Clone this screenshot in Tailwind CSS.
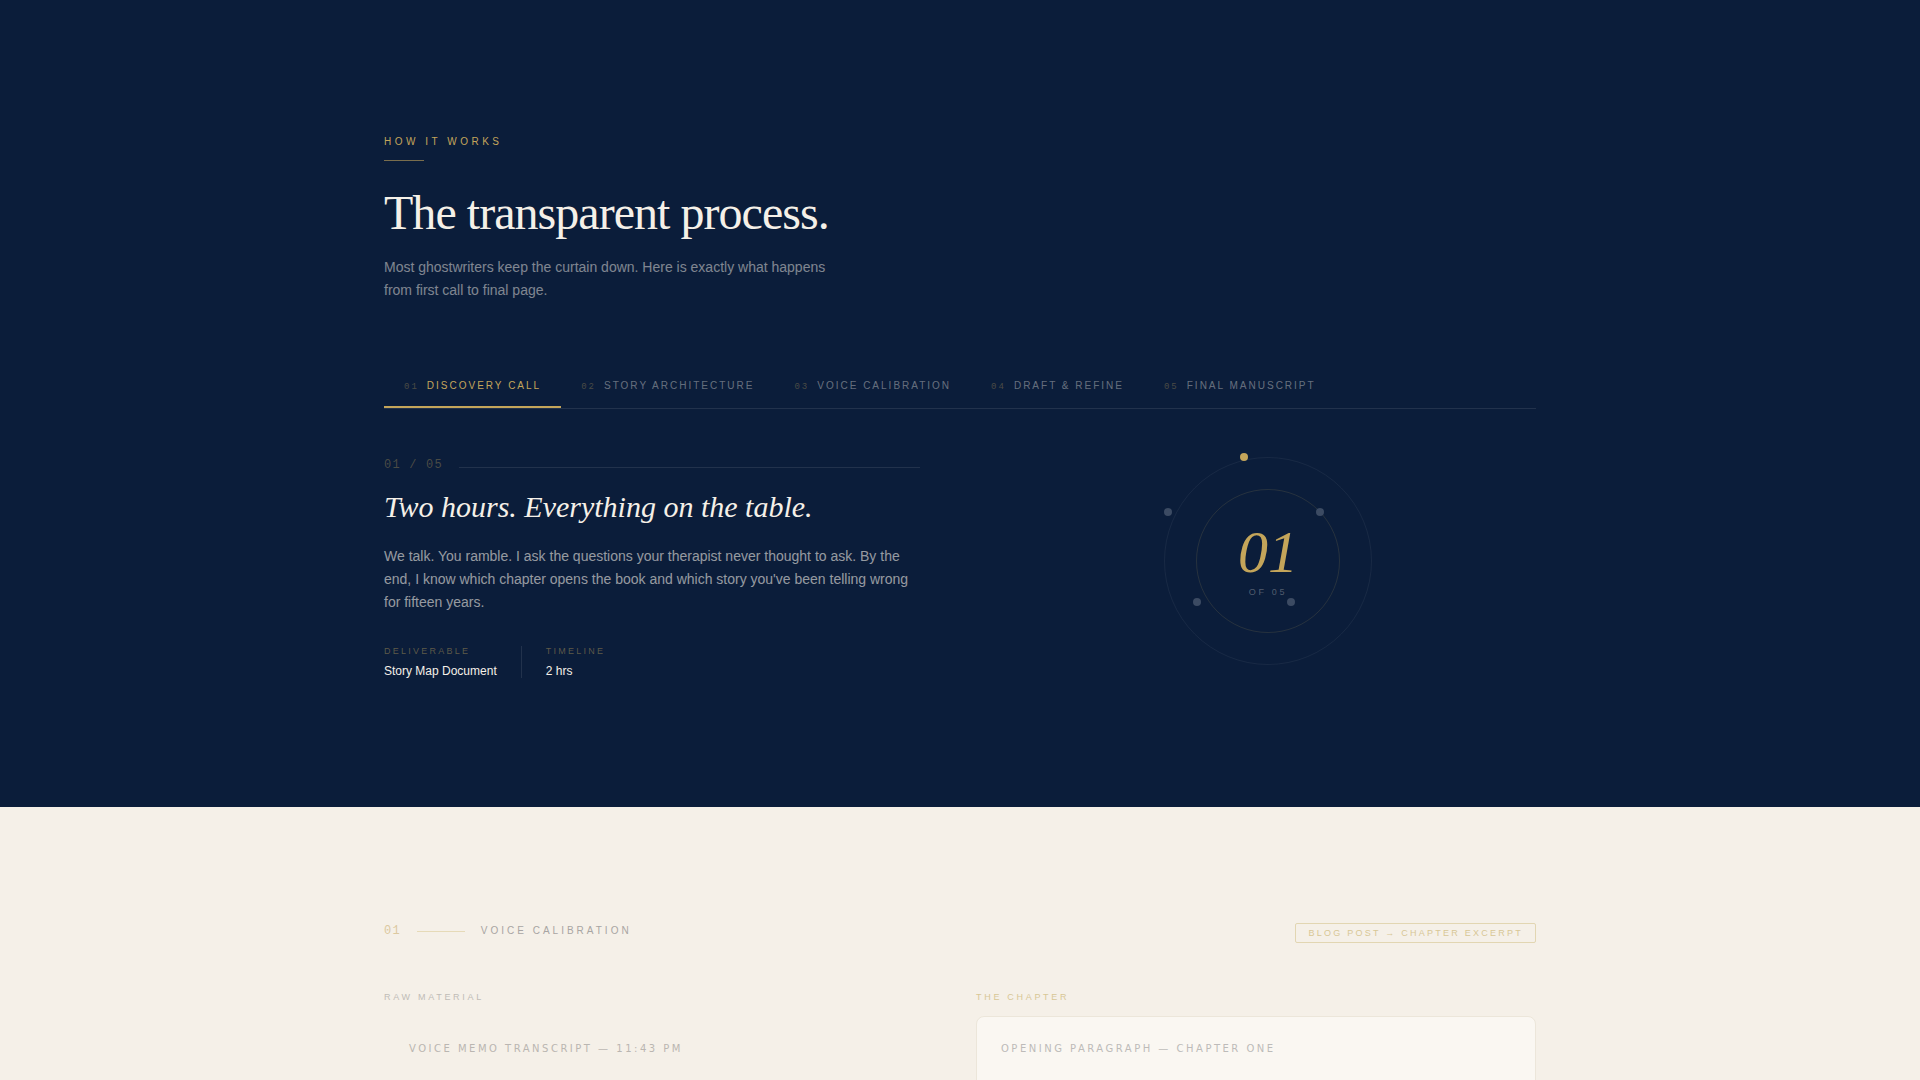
<!DOCTYPE html>
<html lang="en">
<head>
  <meta charset="UTF-8">
  <title>How It Works</title>
  <script src="https://cdn.jsdelivr.net/npm/@tailwindcss/browser@4"></script>
</head>
<body class="bg-[#f5f0e8] font-['Liberation_Sans',Arial,sans-serif] h-screen overflow-hidden">

  <section class="bg-[#0b1d3a] pt-32 pb-32">
    <div class="max-w-6xl mx-auto">
      <p class="text-[10px] leading-7 tracking-[0.35em] text-[#c4a55a]">HOW IT WORKS</p>
      <div class="w-10 h-px mt-1 bg-[#c4a55a]/60"></div>

      <h1 class="mt-6 font-['Liberation_Serif',serif] text-5xl leading-[56px] tracking-[-0.02em] text-[#f5f0e8]">The transparent process.</h1>
      <p class="mt-[15px] max-w-md text-sm leading-[23px] text-[#f5f0e8]/50">Most ghostwriters keep the curtain down. Here is exactly what happens from first call to final page.</p>

      <!-- Tabs -->
      <div role="tablist" class="mt-[62px] flex border-b border-[#f5f0e8]/10 text-[10px] leading-4 tracking-[0.2em]">
        <button type="button" role="tab" aria-selected="true" class="flex items-baseline gap-2 px-5 pt-3.5 pb-[11px] border-b-2 border-[#c4a55a] text-[#c4a55a]"><span class="font-['Liberation_Mono',monospace] text-[9px] tracking-[2px] text-[#c4a55a]/35">01</span>DISCOVERY CALL</button>
        <button type="button" role="tab" class="flex items-baseline gap-2 px-5 pt-3.5 pb-[11px] border-b-2 border-transparent text-[#f5f0e8]/40"><span class="font-['Liberation_Mono',monospace] text-[9px] tracking-[2px] text-[#c4a55a]/35">02</span>STORY ARCHITECTURE</button>
        <button type="button" role="tab" class="flex items-baseline gap-2 px-5 pt-3.5 pb-[11px] border-b-2 border-transparent text-[#f5f0e8]/40"><span class="font-['Liberation_Mono',monospace] text-[9px] tracking-[2px] text-[#c4a55a]/35">03</span>VOICE CALIBRATION</button>
        <button type="button" role="tab" class="flex items-baseline gap-2 px-5 pt-3.5 pb-[11px] border-b-2 border-transparent text-[#f5f0e8]/40"><span class="font-['Liberation_Mono',monospace] text-[9px] tracking-[2px] text-[#c4a55a]/35">04</span>DRAFT &amp; REFINE</button>
        <button type="button" role="tab" class="flex items-baseline gap-2 px-5 pt-3.5 pb-[11px] border-b-2 border-transparent text-[#f5f0e8]/40"><span class="font-['Liberation_Mono',monospace] text-[9px] tracking-[2px] text-[#c4a55a]/35">05</span>FINAL MANUSCRIPT</button>
      </div>

      <div class="mt-12 grid grid-cols-2 gap-20">
        <div>
          <div class="flex items-end gap-4">
            <span class="font-['Liberation_Mono',monospace] text-xs leading-4 tracking-[0.1em] text-[#c4a55a]/35">01 / 05</span>
            <div class="flex-1 h-px mb-[5px] bg-[#f5f0e8]/10"></div>
          </div>
          <h2 class="mt-3.5 font-['Liberation_Serif',serif] italic text-3xl leading-10 text-[#f5f0e8]">Two hours. Everything on the table.</h2>
          <p class="mt-4.5 text-sm leading-[23px] text-[#f5f0e8]/60">We talk. You ramble. I ask the questions your therapist never thought to ask. By the end, I know which chapter opens the book and which story you've been telling wrong for fifteen years.</p>
          <dl class="mt-[31px] flex gap-6">
            <div>
              <dt class="text-[9px] leading-3 tracking-[0.25em] text-[#c4a55a]/45">DELIVERABLE</dt>
              <dd class="mt-1.5 text-xs leading-4 text-[#f5f0e8]">Story Map Document</dd>
            </div>
            <div class="w-px my-px bg-[#f5f0e8]/10"></div>
            <div>
              <dt class="text-[9px] leading-3 tracking-[0.25em] text-[#c4a55a]/45">TIMELINE</dt>
              <dd class="mt-1.5 text-xs leading-4 text-[#f5f0e8]">2 hrs</dd>
            </div>
          </dl>
        </div>

        <!-- Step dial -->
        <div class="flex justify-center items-start">
          <div class="relative size-52 rounded-full border border-[#f5f0e8]/6 flex items-center justify-center">
            <div class="size-36 pb-0.5 rounded-full border border-[#c4a55a]/15 flex flex-col items-center justify-center">
              <span class="font-['Liberation_Serif',serif] italic text-6xl leading-[60px] text-[#c4a55a]">01</span>
              <span class="mt-1 text-[9px] leading-3 tracking-[0.3em] text-[#f5f0e8]/30">OF 05</span>
            </div>
            <span class="absolute left-[75px] -top-[5px] size-2 rounded-full bg-[#c4a55a]"></span>
            <span class="absolute left-[151px] top-[50px] size-2 rounded-full bg-[#3c4b63]"></span>
            <span class="absolute left-[122px] top-[140px] size-2 rounded-full bg-[#3c4b63]"></span>
            <span class="absolute left-[28px] top-[140px] size-2 rounded-full bg-[#3c4b63]"></span>
            <span class="absolute -left-px top-[50px] size-2 rounded-full bg-[#3c4b63]"></span>
          </div>
        </div>
      </div>
    </div>
  </section>

  <section class="pt-29">
    <div class="max-w-6xl mx-auto">
      <div class="flex items-start justify-between">
        <div class="flex items-center gap-4">
          <span class="font-['Liberation_Mono',monospace] text-xs leading-4 tracking-[0.1em] text-[#dcc9a0]">01</span>
          <div class="w-12 h-px bg-[#e6dab8]"></div>
          <h2 class="text-[10px] leading-4 tracking-[0.3em] text-[#a8a5a3]">VOICE CALIBRATION</h2>
        </div>
        <span class="px-3 py-0.5 border border-[#e2d6b2] rounded-xs text-[9px] leading-[14px] tracking-[0.25em] text-[#d8c796]">BLOG POST → CHAPTER EXCERPT</span>
      </div>

      <div class="mt-12 grid grid-cols-2 gap-8">
        <div>
          <p class="text-[9px] leading-3 tracking-[0.3em] text-[#c0bcb7]">RAW MATERIAL</p>
          <div class="mt-[13px] p-6 border border-transparent">
            <p class="text-[10px] leading-4 tracking-[0.25em] text-[#bab6b1] font-['DejaVu_Sans',sans-serif]">VOICE MEMO TRANSCRIPT — 11:43 PM</p>
          </div>
        </div>
        <div>
          <p class="text-[9px] leading-3 tracking-[0.3em] text-[#d8c796]">THE CHAPTER</p>
          <div class="mt-[13px] px-6 pt-6 pb-32 border border-[#ece6da] rounded-lg bg-[#faf7f2]">
            <p class="text-[10px] leading-4 tracking-[0.25em] text-[#bdbbb9] font-['DejaVu_Sans',sans-serif]">OPENING PARAGRAPH — CHAPTER ONE</p>
          </div>
        </div>
      </div>
    </div>
  </section>

</body>
</html>
